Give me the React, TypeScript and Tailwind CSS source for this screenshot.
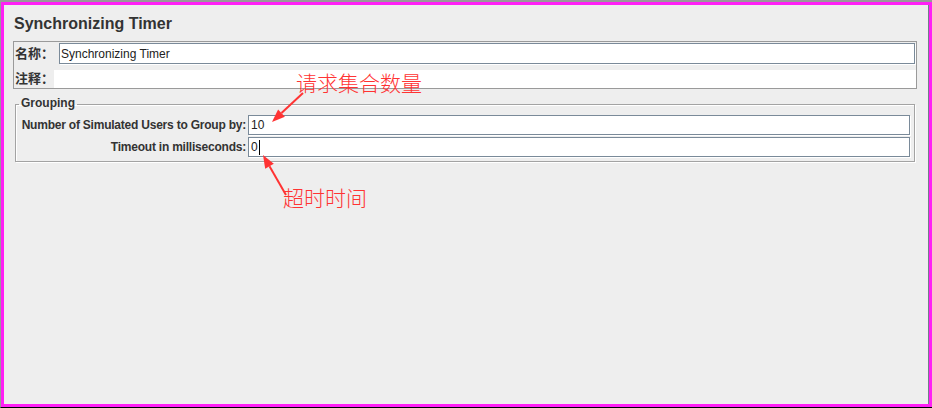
const field =
  "flex items-center bg-white border border-[#7a8a99] shadow-[1px_1px_0_#fff] text-[12px] leading-[14px] text-[#222]";

function Annotations() {
  return (
    <>
      <svg
        className="absolute inset-0 pointer-events-none"
        width={932}
        height={408}
        viewBox="0 0 932 408"
      >
        {/* arrow to "users to group" field */}
        <line x1={303} y1={93} x2={281.5} y2={113.1} stroke="#ff3333" strokeWidth={2} />
        <polygon points="272,122 284.9,116.8 278.1,109.4" fill="#ff3333" />
        {/* arrow to timeout field */}
        <line x1={286} y1={195} x2={269.5} y2={166.3} stroke="#ff3333" strokeWidth={2} />
        <polygon points="263,155 273.8,163.8 265.2,168.8" fill="#ff3333" />
      </svg>
      <div className="absolute left-[296px] top-[72px] text-[21px] leading-[21px] text-[#ff3333] font-['Noto_Sans_CJK_SC',sans-serif] font-light">
        请求集合数量
      </div>
      <div className="absolute left-[283px] top-[187px] text-[21px] leading-[21px] text-[#ff3333] font-['Noto_Sans_CJK_SC',sans-serif] font-light">
        超时时间
      </div>
    </>
  );
}

export default function App() {
  return (
    <div className="relative w-[932px] h-[408px] overflow-hidden bg-[#eeeeee] font-['Liberation_Sans','Noto_Sans_CJK_SC',sans-serif] text-[#333]">
      <div className="h-full border-t-2 border-l border-b border-t-[#999] border-l-[#999] border-b-black">
        <div className="h-full border-[3px] border-[#ff1ff5]">
          <div className="h-full border-r border-r-[#71808a] pt-[10px]">
            <h1 className="pl-[10px] text-[16px] leading-[18px] font-bold">Synchronizing Timer</h1>

            {/* name / comment panel */}
            <div className="mt-[8px] ml-[9px] w-[904px] border border-[#9a9a9a]">
              <div className="flex h-[23px] pt-[1px] items-start">
                <div className="w-[45px] h-[21px] flex items-center pl-[1px] text-[13px] font-bold">名称：</div>
                <div className={`${field} w-[856px] h-[21px] pl-[1px]`}>Synchronizing Timer</div>
              </div>
              <div className="flex h-[23px] items-end">
                <div className="w-[40px] h-[18px] flex items-center pl-[1px] text-[13px] font-bold">注释：</div>
                <div className="w-[862px] h-[18px] bg-white"></div>
              </div>
            </div>

            {/* grouping */}
            <fieldset className="mt-[6px] ml-[11px] w-[900px] border border-[#a3a3a3] shadow-[inset_1px_1px_0_#fff,1px_1px_0_#fff] pb-[2px]">
              <legend className="ml-[3px] px-[2px] pt-[1px] pb-[3px] text-[12px] leading-[14px] font-bold">Grouping</legend>
              <div className="pt-[2px]">
                <div className="flex h-[22px] items-start">
                  <div className="w-[230px] h-[20px] flex items-center justify-end text-[12px] font-bold tracking-[-0.22px]">
                    Number of Simulated Users to Group by:
                  </div>
                  <div className={`${field} ml-[2px] w-[662px] h-[20px] pl-[2px]`}>10</div>
                </div>
                <div className="flex h-[22px] items-start">
                  <div className="w-[230px] h-[20px] flex items-center justify-end text-[12px] font-bold tracking-[-0.22px]">
                    Timeout in milliseconds:
                  </div>
                  <div className={`${field} ml-[2px] w-[662px] h-[20px] pl-[2px]`}>
                    0<span className="ml-[1px] h-[15px] border-l border-black"></span>
                  </div>
                </div>
              </div>
            </fieldset>
          </div>
        </div>
      </div>
      <Annotations />
    </div>
  );
}
